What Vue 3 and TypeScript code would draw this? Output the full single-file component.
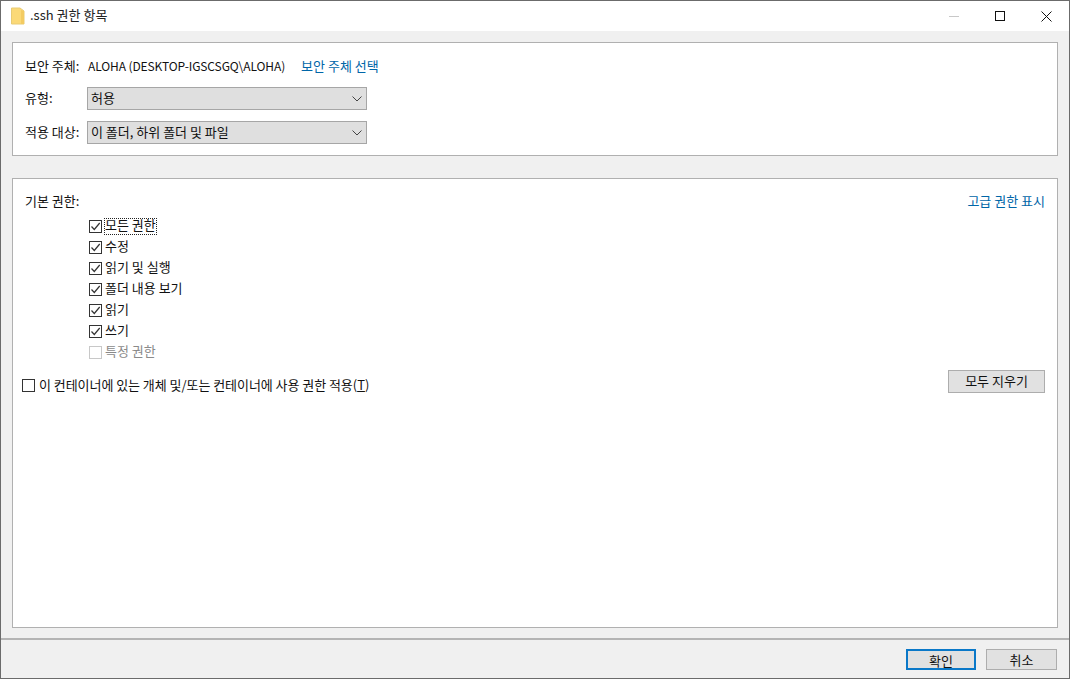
<script setup lang="ts">
interface Perm { label: string; checked: boolean; disabled?: boolean; focus?: boolean }
const perms: Perm[] = [
  { label: '모든 권한', checked: true, focus: true },
  { label: '수정', checked: true },
  { label: '읽기 및 실행', checked: true },
  { label: '폴더 내용 보기', checked: true },
  { label: '읽기', checked: true },
  { label: '쓰기', checked: true },
  { label: '특정 권한', checked: false, disabled: true },
]
</script>

<template>
  <div class="window">
    <header class="titlebar">
      <svg class="folder" width="14" height="18" viewBox="0 0 14 18">
        <path d="M0.500 1h8.500l4 3v13h-12.500z" fill="#fbd977" stroke="#e8cb74" />
        <path d="M10 3l3 1v13h-3z" fill="#f3cb62" />
      </svg>
      <span class="title">.ssh 권한 항목</span>
      <div class="controls">
        <span class="ctl"><svg width="11" height="11" viewBox="0 0 11 11"><path d="M0 5.500h10" stroke="#c8c8c8" /></svg></span>
        <span class="ctl"><svg width="11" height="11" viewBox="0 0 11 11"><rect x="0.500" y="0.500" width="9" height="9" fill="none" stroke="#111" /></svg></span>
        <span class="ctl"><svg width="11" height="11" viewBox="0 0 11 11"><path d="M0.500 0.500l10 10M10.500 0.500l-10 10" stroke="#111" /></svg></span>
      </div>
    </header>

    <main class="body">
      <section class="panel top">
        <div class="row principal">
          <span class="label">보안 주체:</span>
          <span class="latin">ALOHA (DESKTOP-IGSCSGQ\ALOHA)</span>
          <a class="link sel">보안 주체 선택</a>
        </div>
        <div class="row">
          <span class="label">유형:</span>
          <div class="combo"><span>허용</span><svg width="10" height="6" viewBox="0 0 10 6"><path d="M0.500 0.500L5 5l4.500-4.500" fill="none" stroke="#444" /></svg></div>
        </div>
        <div class="row">
          <span class="label">적용 대상:</span>
          <div class="combo"><span>이 폴더, 하위 폴더 및 파일</span><svg width="10" height="6" viewBox="0 0 10 6"><path d="M0.500 0.500L5 5l4.500-4.500" fill="none" stroke="#444" /></svg></div>
        </div>
      </section>

      <section class="panel perms">
        <div class="head">
          <span>기본 권한:</span>
          <a class="link">고급 권한 표시</a>
        </div>
        <ul class="list">
          <li v-for="p in perms" :key="p.label" class="item" :class="{ disabled: p.disabled }">
            <span class="box">
              <svg v-if="p.checked" width="11" height="11" viewBox="0 0 11 11"><path d="M1.500 5.500L4.300 8.500 9.700 2" fill="none" stroke="#333" stroke-width="1.200" /></svg>
            </span>
            <span class="text" :class="{ focus: p.focus }">{{ p.label }}</span>
          </li>
        </ul>
        <div class="inherit">
          <label class="item wide">
            <span class="box"></span>
            <span class="text">이 컨테이너에 있는 개체 및/또는 컨테이너에 사용 권한 적용(<u>T</u>)</span>
          </label>
          <button class="btn clear">모두 지우기</button>
        </div>
      </section>
    </main>

    <footer class="footer">
      <button class="btn primary">확인</button>
      <button class="btn">취소</button>
    </footer>
  </div>
</template>

<style>
html, body { margin: 0; padding: 0; background: #f0f0f0; }
</style>

<style scoped>
.window {
  box-sizing: border-box;
  width: 1070px;
  height: 679px;
  border: 1px solid #6b6b6b;
  background: #f0f0f0;
  display: flex;
  flex-direction: column;
  font-family: "Noto Sans CJK KR", "Noto Sans", sans-serif;
  font-size: 13px;
  color: #111;
}
.titlebar {
  height: 30px;
  flex: none;
  background: #fff;
  display: flex;
  align-items: center;
  padding-left: 10px;
}
.folder { margin-right: 5px; margin-bottom: 1px; }
.title { color: #222; margin-bottom: 4px; }
.controls { margin-left: auto; display: flex; }
.ctl {
  width: 46px;
  height: 30px;
  display: flex;
  align-items: center;
  justify-content: center;
}
.body {
  flex: 1;
  padding: 11px 11px 0;
  display: flex;
  flex-direction: column;
  gap: 22px;
}
.panel {
  box-sizing: border-box;
  background: #fff;
  border: 1px solid #b0b0b0;
}
.top {
  height: 114px;
  padding: 13px 12px 0;
}
.row {
  display: flex;
  align-items: center;
  height: 23px;
  margin-bottom: 11px;
}
.principal { height: 20px; margin-bottom: 11px; }
.label { width: 62px; flex: none; padding-bottom: 2px; }
.latin { font-size: 12px; letter-spacing: -0.1px; margin-left: 1px; padding-bottom: 2px; }
.link { color: #0066a8; }
.sel { margin-left: 16px; padding-bottom: 2px; }
.combo {
  box-sizing: border-box;
  width: 280px;
  height: 23px;
  background: #dfdfdf;
  border: 1px solid #a6a6a6;
  display: flex;
  align-items: center;
  justify-content: space-between;
  padding: 0 4px 0 3px;
}
.combo span { padding-bottom: 2px; }
.perms {
  height: 450px;
  padding: 12px 12px 0;
}
.head {
  display: flex;
  justify-content: space-between;
  align-items: center;
  height: 20px;
  margin-bottom: 4px;
  padding-bottom: 2px;
  box-sizing: border-box;
}
.list {
  list-style: none;
  margin: 0;
  padding: 0 0 0 63px;
}
.item {
  display: flex;
  align-items: flex-start;
  height: 21px;
  gap: 3px;
}
.box {
  box-sizing: border-box;
  width: 13px;
  height: 13px;
  margin: 5px 0 0 1px;
  background: #fff;
  border: 1px solid #333;
  display: flex;
  align-items: center;
  justify-content: center;
  flex: none;
}
.text { line-height: 12px; margin-top: 4px; padding-bottom: 3px; }
.focus { outline: 1px dotted #222; outline-offset: 0; }
.disabled { color: #8a8a8a; }
.disabled .box { border-color: #c8c8c8; }
.inherit {
  display: flex;
  justify-content: space-between;
  align-items: flex-start;
  margin: 8px 0 0 -4px;
  height: 23px;
}
.wide { gap: 4px; margin-top: 4px; }
.wide .text { margin-top: 5px; letter-spacing: -0.05px; }
.btn {
  box-sizing: border-box;
  width: 71px;
  height: 21px;
  padding: 0 0 2px;
  background: #e1e1e1;
  border: 1px solid #adadad;
  font: inherit;
  color: #111;
}
.clear { width: 97px; height: 23px; }
.footer {
  flex: none;
  height: 39px;
  margin-top: 10px;
  border-top: 2px solid #b4b4b4;
  display: flex;
  justify-content: flex-end;
  align-items: center;
  gap: 10px;
  padding: 0 12px 0 0;
}
.primary { width: 70px; border: 2px solid #0a78c8; }
</style>
